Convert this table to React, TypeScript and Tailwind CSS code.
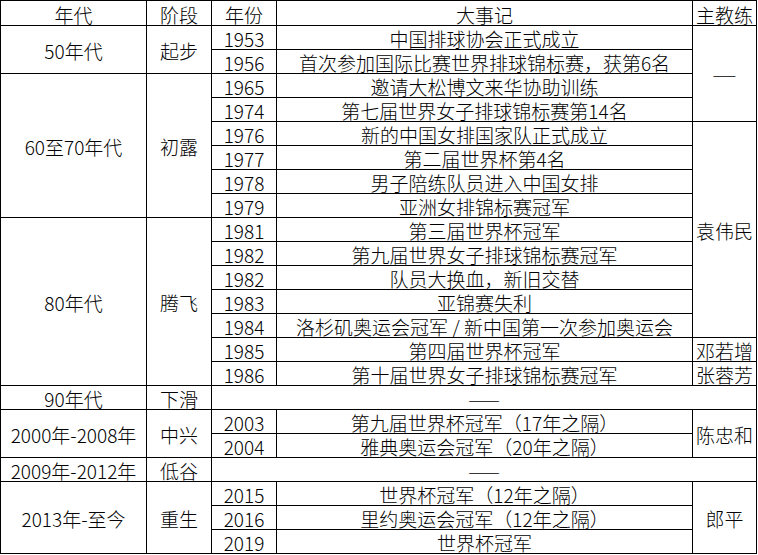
import React from 'react';

type Cell = { text: string; span?: string; cls?: string };

// rows of the volleyball history table, spans follow the merged cells
const ROWS: Cell[][] = [
  [{ text: '年代' }, { text: '阶段' }, { text: '年份' }, { text: '大事记' }, { text: '主教练' }],
  [{ text: '50年代', span: 'row-span-2' }, { text: '起步', span: 'row-span-2' }, { text: '1953' }, { text: '中国排球协会正式成立' }, { text: '——', span: 'row-span-4', cls: 'text-[14px]' }],
  [{ text: '1956' }, { text: '首次参加国际比赛世界排球锦标赛，获第6名' }],
  [{ text: '60至70年代', span: 'row-span-6' }, { text: '初露', span: 'row-span-6' }, { text: '1965' }, { text: '邀请大松博文来华协助训练' }],
  [{ text: '1974' }, { text: '第七届世界女子排球锦标赛第14名' }],
  [{ text: '1976' }, { text: '新的中国女排国家队正式成立' }, { text: '袁伟民', span: 'row-span-9' }],
  [{ text: '1977' }, { text: '第二届世界杯第4名' }],
  [{ text: '1978' }, { text: '男子陪练队员进入中国女排' }],
  [{ text: '1979' }, { text: '亚洲女排锦标赛冠军' }],
  [{ text: '80年代', span: 'row-span-7' }, { text: '腾飞', span: 'row-span-7' }, { text: '1981' }, { text: '第三届世界杯冠军' }],
  [{ text: '1982' }, { text: '第九届世界女子排球锦标赛冠军' }],
  [{ text: '1982' }, { text: '队员大换血，新旧交替' }],
  [{ text: '1983' }, { text: '亚锦赛失利' }],
  [{ text: '1984' }, { text: '洛杉矶奥运会冠军 / 新中国第一次参加奥运会' }],
  [{ text: '1985' }, { text: '第四届世界杯冠军' }, { text: '邓若增' }],
  [{ text: '1986' }, { text: '第十届世界女子排球锦标赛冠军' }, { text: '张蓉芳' }],
  [{ text: '90年代' }, { text: '下滑' }, { text: '——', span: 'col-span-3' }],
  [{ text: '2000年-2008年', span: 'row-span-2' }, { text: '中兴', span: 'row-span-2' }, { text: '2003' }, { text: '第九届世界杯冠军（17年之隔）' }, { text: '陈忠和', span: 'row-span-2' }],
  [{ text: '2004' }, { text: '雅典奥运会冠军（20年之隔）' }],
  [{ text: '2009年-2012年' }, { text: '低谷' }, { text: '——', span: 'col-span-3' }],
  [{ text: '2013年-至今', span: 'row-span-3' }, { text: '重生', span: 'row-span-3' }, { text: '2015' }, { text: '世界杯冠军（12年之隔）' }, { text: '郎平', span: 'row-span-3' }],
  [{ text: '2016' }, { text: '里约奥运会冠军（12年之隔）' }],
  [{ text: '2019' }, { text: '世界杯冠军' }],
];

export default function App() {
  return (
    <div className="min-h-screen bg-white" style={{ fontFamily: '"Noto Sans CJK SC", "Noto Sans", sans-serif' }}>
      <div className="grid w-fit grid-cols-[145px_64px_64px_415px_63px] grid-rows-[24px_repeat(22,23px)] gap-px bg-black p-px text-[19px] font-light text-black">
        {ROWS.flat().map((c, i) => (
          <div key={i} className={`flex items-center justify-center whitespace-nowrap bg-white pt-[2px] leading-[19px] ${c.span ?? ''} ${c.cls ?? ''}`}>
            {c.text}
          </div>
        ))}
      </div>
    </div>
  );
}
